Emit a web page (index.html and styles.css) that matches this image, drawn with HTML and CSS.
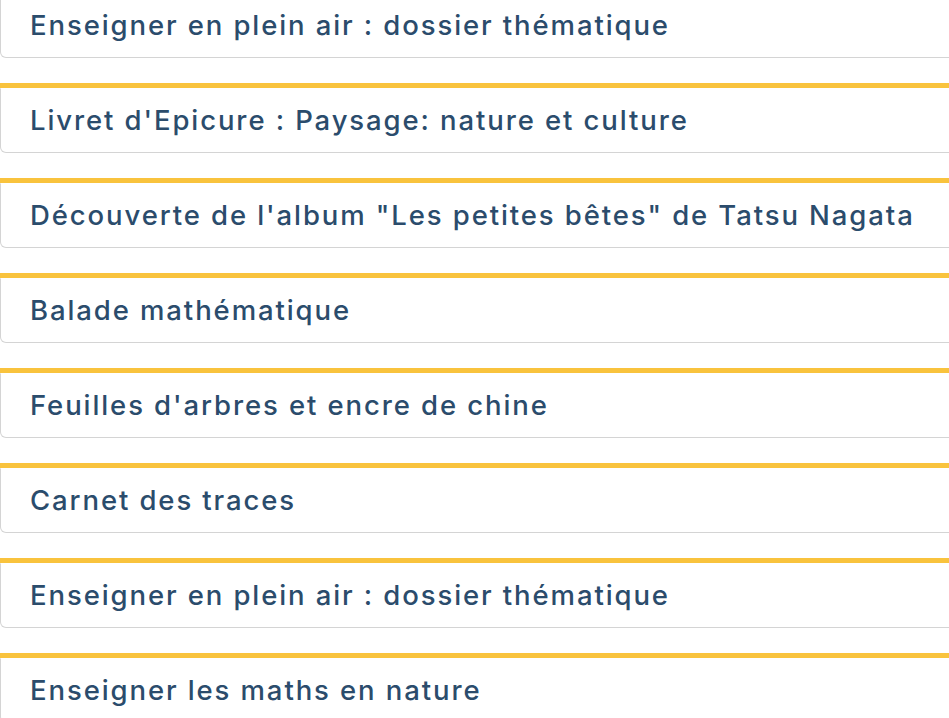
FILE: index.html
```html
<!DOCTYPE html>
<html lang="fr">
<head>
<meta charset="utf-8">
<title>Ressources</title>
<link rel="stylesheet" href="styles.css">
</head>
<body>
<ul class="list">
  <li class="item"><a class="card" href="#">Enseigner en plein air : dossier thématique</a></li>
  <li class="item"><a class="card" href="#">Livret d'Epicure : Paysage: nature et culture</a></li>
  <li class="item"><a class="card" href="#">Découverte de l'album "Les petites bêtes" de Tatsu Nagata</a></li>
  <li class="item"><a class="card" href="#">Balade mathématique</a></li>
  <li class="item"><a class="card" href="#">Feuilles d'arbres et encre de chine</a></li>
  <li class="item"><a class="card" href="#">Carnet des traces</a></li>
  <li class="item"><a class="card" href="#">Enseigner en plein air : dossier thématique</a></li>
  <li class="item"><a class="card" href="#">Enseigner les maths en nature</a></li>
</ul>
</body>
</html>
```
FILE: styles.css
```css
html, body {
  margin: 0;
  padding: 0;
  background: #ffffff;
  overflow: hidden;
}
.list {
  list-style: none;
  margin: -12px -20px 0 0;
  padding: 0;
  display: flex;
  flex-direction: column;
  gap: 25px;
}
.item {
  border-top: 5px solid #f9c33d;
}
.card {
  display: flex;
  align-items: center;
  box-sizing: border-box;
  height: 65px;
  padding: 0 0 1px 29px;
  border: 1px solid #d4d4d4;
  border-top-color: #ffffff;
  border-radius: 0 0 0 6px;
  color: #2b4c6c;
  text-decoration: none;
  font-family: "Inter", "Noto Sans", sans-serif;
  font-weight: 500;
  font-size: 27.5px;
  letter-spacing: 1.9px;
  white-space: nowrap;
}
```
